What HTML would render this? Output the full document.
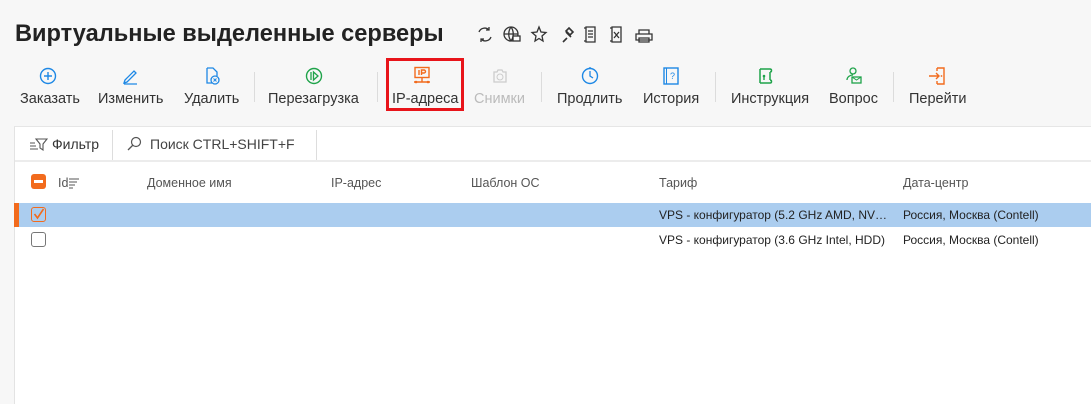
<!DOCTYPE html>
<html><head><meta charset="utf-8"><style>
*{margin:0;padding:0;box-sizing:border-box}
body{width:1091px;height:404px;background:#f7f7f7;font-family:"Liberation Sans",sans-serif;color:#333;position:relative;overflow:hidden}
.a{position:absolute;white-space:nowrap}
h1{position:absolute;left:15px;top:21px;font-size:23.6px;font-weight:bold;color:#222;white-space:nowrap}
.lbl{position:absolute;top:91px;font-size:14.5px;color:#333;white-space:nowrap}
.sep{position:absolute;top:72px;width:1px;height:30px;background:#dcdcdc}
.ic{position:absolute;top:66px}
.panel{position:absolute;left:14px;top:126px;right:0;bottom:0;background:#fff;border-left:1px solid #e3e3e3;border-top:1px solid #e6e6e6}
.th{position:absolute;top:176px;font-size:12.5px;color:#555}
.td{position:absolute;font-size:12px;color:#222;white-space:nowrap}
</style></head><body>
<h1>Виртуальные выделенные серверы</h1>
<svg class="a" style="left:474px;top:24px" width="200" height="22" viewBox="0 0 200 22" fill="none" stroke="#333" stroke-width="1.3">
<path d="M5 8a6 6 0 0 1 10-2M17 13a6 6 0 0 1-10 2M15 3v3h-3M7 18v-3h3"/>
<circle cx="37" cy="10" r="7"/><path d="M30 10h14M37 3c-3 4-3 10 0 14M37 3c3 4 3 10 0 14"/><rect x="39" y="12" width="7" height="5" fill="#fff"/>
<path d="M65 3l2 5 5 .5-4 3.5 1 5-4-2.5-4 2.5 1-5-4-3.5 5-.5z"/>
<path d="M89 18l4-4M92 8l5 5M95 4l4 4-3 3-4-4z" stroke-width="1.6"/>
<path d="M112 3h9v15h-9zM110 4h2M110 17h2M114 7h5M114 10h5M114 13h5"/>
<path d="M138 3h9v15h-9zM136 4h2M136 17h2M140 8l5 6M145 8l-5 6" />
<path d="M165 6h10v4h-10zM162 10h16v6h-16zM165 14h10v4h-10z"/>
</svg>

<svg class="ic" style="left:38px" width="20" height="20"><circle cx="10" cy="10" r="7.5" fill="none" stroke="#1e88e5" stroke-width="1.4"/><path d="M10 6v8M6 10h8" stroke="#1e88e5" stroke-width="1.4"/></svg>
<svg class="ic" style="left:120px" width="20" height="20"><path d="M5 14l9-9 2 2-9 9-3 1zM4 18h13" fill="none" stroke="#1e88e5" stroke-width="1.3"/></svg>
<svg class="ic" style="left:201px" width="20" height="20"><path d="M6 2h6l4 4v4M6 2v15h5" fill="none" stroke="#1e88e5" stroke-width="1.3"/><circle cx="14" cy="14" r="4" fill="none" stroke="#1e88e5" stroke-width="1.3"/><path d="M12.5 12.5l3 3M15.5 12.5l-3 3" stroke="#1e88e5"/></svg>
<svg class="ic" style="left:304px" width="20" height="20"><circle cx="10" cy="10" r="7.5" fill="none" stroke="#1fa34a" stroke-width="1.4"/><path d="M7 6v8M9.5 6l4.5 4-4.5 4z" fill="none" stroke="#1fa34a" stroke-width="1.3"/></svg>
<svg class="ic" style="left:412px" width="20" height="20"><rect x="3" y="1.5" width="14" height="10" fill="none" stroke="#f26b1d" stroke-width="1.4"/><path d="M7 4v5M9.5 9V4h2.5a1.5 1.5 0 0 1 0 3H9.5M10 12v4M2 16h16" stroke="#f26b1d" stroke-width="1.4" fill="none"/><circle cx="4" cy="16" r="1.3" fill="#f26b1d"/><circle cx="16" cy="16" r="1.3" fill="#f26b1d"/></svg>
<svg class="ic" style="left:490px" width="20" height="20"><path d="M4 6h3l1-2h4l1 2h3v10H4z" fill="none" stroke="#ccc" stroke-width="1.3"/><circle cx="10" cy="11" r="3" fill="none" stroke="#ccc"/></svg>
<svg class="ic" style="left:580px" width="20" height="20"><circle cx="10" cy="10" r="7.5" fill="none" stroke="#1e88e5" stroke-width="1.4"/><path d="M10 5v5l3 2M10 1v2M2 10h1M17 10h1" stroke="#1e88e5" stroke-width="1.3" fill="none"/></svg>
<svg class="ic" style="left:661px" width="20" height="20"><rect x="3" y="2" width="14" height="16" fill="none" stroke="#1e88e5" stroke-width="1.4"/><path d="M5.5 2v16" stroke="#1e88e5"/><text x="9" y="13" font-size="9" fill="#1e88e5" font-family="Liberation Sans">?</text></svg>
<svg class="ic" style="left:755px" width="20" height="20"><path d="M5 3h10M5 17h10M5 3v14M15 3c2 0 2 3 0 3M15 14c2 0 2 3 0 3M15 6v8" fill="none" stroke="#1fa34a" stroke-width="1.5"/><circle cx="9" cy="10" r="1.3" fill="#1fa34a"/><path d="M9 10v4" stroke="#1fa34a" stroke-width="1.4"/></svg>
<svg class="ic" style="left:844px" width="20" height="20"><circle cx="9" cy="5" r="3" fill="none" stroke="#1fa34a" stroke-width="1.3"/><path d="M3 14c0-3 3-5 6-5" fill="none" stroke="#1fa34a" stroke-width="1.3"/><rect x="8" y="11" width="9" height="6" fill="none" stroke="#1fa34a" stroke-width="1.3"/><path d="M8 11l4.5 3 4.5-3" fill="none" stroke="#1fa34a"/></svg>
<svg class="ic" style="left:927px" width="20" height="20"><path d="M10 2h7v16h-7M10 2v3M10 15v3M2 10h10M9 7l3 3-3 3" fill="none" stroke="#f26b1d" stroke-width="1.4"/><circle cx="14.5" cy="10" r="0.9" fill="#f26b1d"/></svg>

<div class="lbl" style="left:20px">Заказать</div>
<div class="lbl" style="left:98px">Изменить</div>
<div class="lbl" style="left:184px">Удалить</div>
<div class="sep" style="left:254px"></div>
<div class="lbl" style="left:268px">Перезагрузка</div>
<div class="sep" style="left:377px"></div>
<div class="lbl" style="left:392px">IP-адреса</div>
<div class="a" style="left:386px;top:58px;width:78px;height:53px;border:3px solid #e8141a"></div>
<div class="lbl" style="left:474px;color:#bbb">Снимки</div>
<div class="sep" style="left:541px"></div>
<div class="lbl" style="left:557px">Продлить</div>
<div class="lbl" style="left:643px">История</div>
<div class="sep" style="left:715px"></div>
<div class="lbl" style="left:731px">Инструкция</div>
<div class="lbl" style="left:829px">Вопрос</div>
<div class="sep" style="left:893px"></div>
<div class="lbl" style="left:909px">Перейти</div>

<div class="panel"></div>
<div class="a" style="left:15px;top:160px;right:0;height:2px;background:#ececec"></div>
<svg class="a" style="left:28px;top:135px" width="20" height="18"><path d="M8 4h11l-4 5v6l-3-2V9zM2 8h5M2 11h6M2 14h8" fill="none" stroke="#555" stroke-width="1.1"/></svg>
<div class="a" style="left:52px;top:136px;font-size:14px;color:#333">Фильтр</div>
<div class="a" style="left:112px;top:130px;width:1px;height:30px;background:#ddd"></div>
<svg class="a" style="left:125px;top:135px" width="20" height="18"><circle cx="11" cy="7" r="4.5" fill="none" stroke="#555" stroke-width="1.2"/><path d="M8 10l-5 5" stroke="#555" stroke-width="1.3"/></svg>
<div class="a" style="left:150px;top:136px;font-size:14px;color:#444">Поиск CTRL+SHIFT+F</div>
<div class="a" style="left:316px;top:130px;width:1px;height:30px;background:#ddd"></div>

<div class="a" style="left:31px;top:174px;width:15px;height:15px;background:#f26b1d;border-radius:3px"><div style="position:absolute;left:3px;top:6px;width:9px;height:2.5px;background:#fff"></div></div>
<div class="th" style="left:58px">Id</div>
<svg class="a" style="left:68px;top:177px" width="12" height="12"><path d="M1 2h10M1 5h8M1 8h6M1 11h4" stroke="#555"/></svg>
<div class="th" style="left:147px">Доменное имя</div>
<div class="th" style="left:331px">IP-адрес</div>
<div class="th" style="left:471px">Шаблон ОС</div>
<div class="th" style="left:659px">Тариф</div>
<div class="th" style="left:903px">Дата-центр</div>

<div class="a" style="left:14px;top:203px;right:0;height:24px;background:#abcdef"></div>
<div class="a" style="left:14px;top:203px;width:5px;height:24px;background:#f26b1d"></div>
<div class="a" style="left:31px;top:207px;width:15px;height:15px;border:1.3px solid #f26b1d;border-radius:3px"></div>
<svg class="a" style="left:31px;top:206px" width="16" height="16"><path d="M3.5 8l3 4 6-9" fill="none" stroke="#f26b1d" stroke-width="1.6"/></svg>
<div class="td" style="left:659px;top:208px">VPS - конфигуратор (5.2 GHz AMD, NV…</div>
<div class="td" style="left:903px;top:208px">Россия, Москва (Contell)</div>

<div class="a" style="left:31px;top:232px;width:15px;height:15px;border:1.3px solid #777;border-radius:3px"></div>
<div class="td" style="left:659px;top:233px">VPS - конфигуратор (3.6 GHz Intel, HDD)</div>
<div class="td" style="left:903px;top:233px">Россия, Москва (Contell)</div>
</body></html>
